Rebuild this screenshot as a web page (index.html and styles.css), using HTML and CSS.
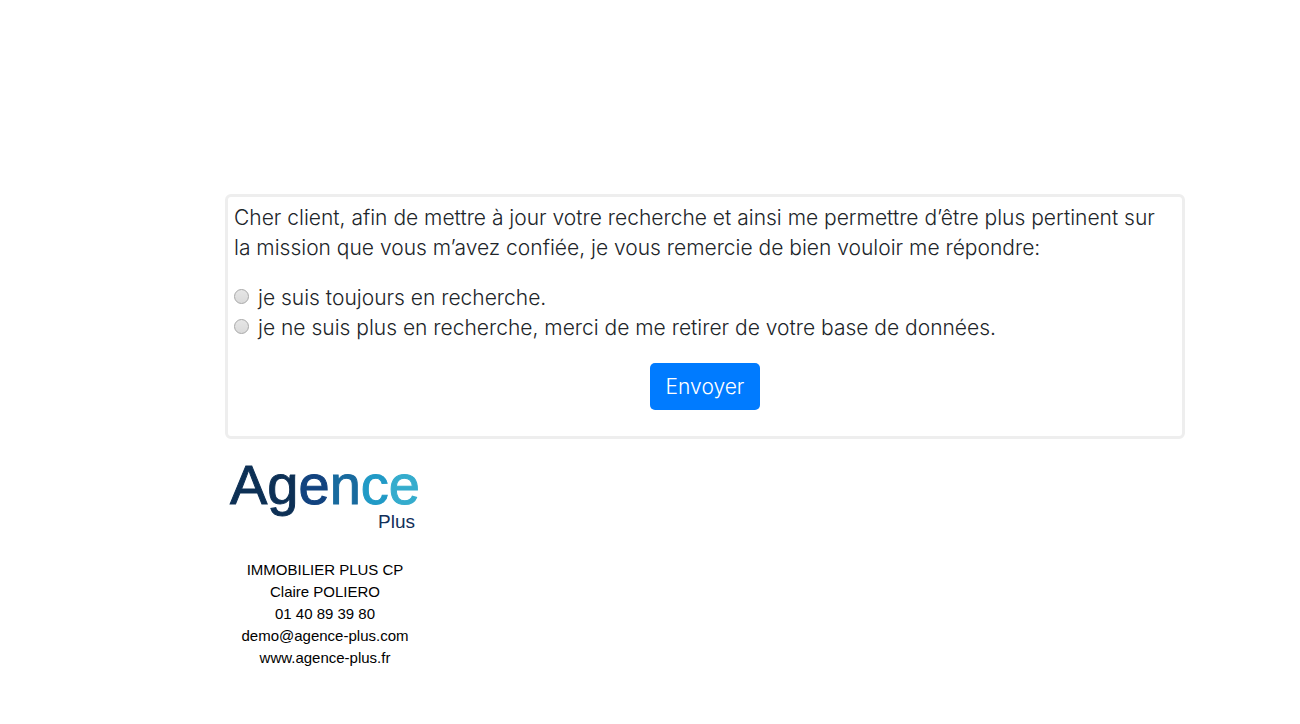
FILE: index.html
```html
<!DOCTYPE html>
<html lang="fr">
<head>
  <meta charset="UTF-8">
  <meta name="viewport" content="width=device-width, initial-scale=1.0">
  <title>Agence Plus</title>
  <link rel="stylesheet" href="styles.css">
</head>
<body>
  <main class="page">
    <form class="survey">
      <p class="intro">Cher client, afin de mettre à jour votre recherche et ainsi me permettre d’être plus pertinent sur la mission que vous m’avez confiée, je vous remercie de bien vouloir me répondre:</p>

      <div class="choice">
        <input type="radio" id="enRecherche" name="reponse" value="oui">
        <label for="enRecherche">je suis toujours en recherche.</label>
      </div>
      <div class="choice">
        <input type="radio" id="plusEnRecherche" name="reponse" value="non">
        <label for="plusEnRecherche">je ne suis plus en recherche, merci de me retirer de votre base de données.</label>
      </div>

      <div class="actions">
        <button type="submit" class="button">Envoyer</button>
      </div>
    </form>

    <!-- Signature de l'agence -->
    <div class="signature">
      <div class="logo">
        <div class="logo-name"><span class="navy">Ag</span><span class="blue">e</span><span class="steel">n</span><span class="cyan">c</span><span class="sky">e</span></div>
        <div class="logo-sub">Plus</div>
      </div>
      <div class="contact">
        <div>IMMOBILIER PLUS CP</div>
        <div>Claire POLIERO</div>
        <div>01 40 89 39 80</div>
        <div>demo@agence-plus.com</div>
        <div>www.agence-plus.fr</div>
      </div>
    </div>
  </main>
</body>
</html>
```
FILE: styles.css
```css
* {
  box-sizing: border-box;
}

body {
  margin: 0;
  background-color: #fff;
  color: #212529;
  font-family: "Century Gothic", Inter, sans-serif;
  font-weight: 300;
  font-size: 21px;
  line-height: 30px;
}

.page {
  padding: 194px 115px 40px 225px;
}

.survey {
  border: 3px solid #eee;
  border-radius: 6px;
  padding: 6px 6px 26px;
}

.intro {
  margin: 0 0 20px;
  padding-right: 12px;
}

.choice {
  display: flex;
  align-items: center;
  gap: 9px;
}

.choice input {
  appearance: none;
  width: 15px;
  height: 15px;
  margin: 0 0 3px;
  border: 1px solid #a8a8a8;
  border-radius: 50%;
  background: linear-gradient(#e6e6e6, #dadada);
}

.choice input:checked {
  background: radial-gradient(#444 35%, #ddd 40%);
}

.actions {
  margin-top: 20px;
}

.button {
  display: block;
  margin: 0 auto;
  padding: 8px 16px;
  border: 0;
  border-radius: 5px;
  background-color: #007bff;
  color: #fff;
  font: inherit;
  line-height: 31px;
  cursor: pointer;
}

.button:hover {
  background-color: #0069d9;
}

.signature {
  width: 200px;
  margin-top: 18px;
  font-family: "Liberation Sans", Arial, sans-serif;
  font-weight: 400;
}

.logo {
  padding: 0 5px;
}

.logo-name {
  font-size: 56px;
  line-height: 56px;
  -webkit-text-stroke: 1px;
}

.logo-sub {
  padding-right: 5px;
  color: #12305a;
  font-size: 19px;
  line-height: 18px;
  text-align: right;
}

.navy {
  color: #0d3055;
}

.blue {
  color: #12437f;
}

.steel {
  color: #186a9e;
}

.cyan {
  color: #219ac6;
}

.sky {
  color: #35accd;
}

.contact {
  margin-top: 28px;
  color: #000;
  font-size: 15px;
  line-height: 22px;
  text-align: center;
}
```
